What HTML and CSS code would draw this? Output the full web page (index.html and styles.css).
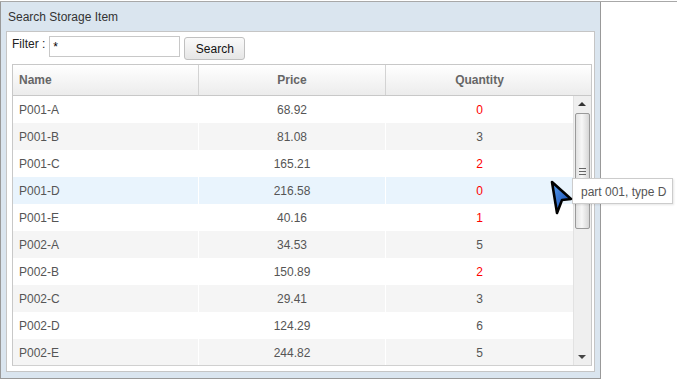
FILE: index.html
```html
<!DOCTYPE html>
<html lang="en">
<head>
    <meta charset="UTF-8">
    <title>Search Storage Item</title>
    <link rel="stylesheet" href="styles.css">
</head>
<body>
<div class="page">
    <div class="panel">
        <div class="panel-title">Search Storage Item</div>
        <div class="panel-body">
            <div class="filter-row">
                <label for="filter">Filter :</label>
                <input type="text" id="filter" value="*">
                <button class="button">Search</button>
            </div>
            <div class="grid">
                <div class="grid-head">
                    <div class="hcell col-name">Name</div>
                    <div class="hcell col-price">Price</div>
                    <div class="hcell col-qty">Quantity</div>
                </div>
                <div class="grid-body">
                    <div class="rows" id="rows"></div>
                    <div class="scrollbar">
                        <div class="arrow up"></div>
                        <div class="thumb"><span class="grip"></span></div>
                        <div class="track"></div>
                        <div class="arrow down"></div>
                    </div>
                </div>
            </div>
        </div>
    </div>
    <div class="tooltip">part 001, type D</div>
    <svg class="cursor" width="26" height="36" viewBox="0 0 26 36">
        <defs>
            <linearGradient id="cur" x1="0" y1="0" x2="1" y2="1">
                <stop offset="0" stop-color="#5aa0f0"/>
                <stop offset="1" stop-color="#0b3fa8"/>
            </linearGradient>
        </defs>
        <polygon points="3,2 22,19 13,20 8,33" fill="url(#cur)" stroke="#000" stroke-width="2.6" stroke-linejoin="round"/>
    </svg>
</div>

<script>
    const items = [
        ['P001-A', '68.92', 0],
        ['P001-B', '81.08', 3],
        ['P001-C', '165.21', 2],
        ['P001-D', '216.58', 0],
        ['P001-E', '40.16', 1],
        ['P002-A', '34.53', 5],
        ['P002-B', '150.89', 2],
        ['P002-C', '29.41', 3],
        ['P002-D', '124.29', 6],
        ['P002-E', '244.82', 5]
    ];

    const rows = document.getElementById('rows');
    items.forEach((item, i) => {
        const row = document.createElement('div');
        row.className = 'row' + (i % 2 ? ' alt' : '') + (i === 3 ? ' hover' : '');
        const low = item[2] < 3 ? ' low' : '';
        row.innerHTML =
            '<div class="cell col-name">' + item[0] + '</div>' +
            '<div class="cell col-price">' + item[1] + '</div>' +
            '<div class="cell col-qty' + low + '">' + item[2] + '</div>';
        rows.appendChild(row);
    });
</script>
</body>
</html>
```

FILE: styles.css
```css
body {
    margin: 0;
    font-family: "Liberation Sans", Arial, sans-serif;
    font-size: 12px;
    color: #333;
    background: #fff;
}
.page {
    position: relative;
    margin-top: 1px;
    border-top: 1px solid #a8a8a8;
    height: 380px;
}
.panel {
    width: 599px;
    height: 376px;
    border: 1px solid #999;
    border-top: none;
    background: #dae5ef;
}
.panel-title {
    height: 29px;
    line-height: 31px;
    padding-left: 7px;
    color: #333;
}
.panel-body {
    margin: 0 5px;
    height: 341px;
    border: 1px solid #c5c5c5;
    background: #fff;
    padding: 4px 3px 0 5px;
    box-sizing: border-box;
}
.filter-row {
    display: flex;
    align-items: flex-start;
    height: 24px;
}
.filter-row label {
    color: #222;
    line-height: 17px;
    margin-right: 4px;
}
.filter-row input {
    width: 131px;
    height: 21px;
    margin: 0 4px 0 0;
    padding: 0 3px;
    box-sizing: border-box;
    border: 1px solid #c8c8c8;
    font-family: inherit;
    font-size: 12px;
    outline: none;
}
.button {
    height: 23px;
    width: 61px;
    padding: 0;
    border: 1px solid #c0c0c0;
    border-radius: 3px;
    background: linear-gradient(#fafafa, #e6e6e6);
    font-family: inherit;
    font-size: 12px;
    color: #111;
    margin-top: 1px;
}
.grid {
    margin-top: 4px;
    width: 578px;
    border: 1px solid #c8c8c8;
    border-bottom-color: #d0d0d0;
}
.grid-head {
    display: flex;
    height: 30px;
    border-bottom: 1px solid #c8c8c8;
    background: linear-gradient(#ffffff, #ececec);
}
.hcell {
    line-height: 30px;
    font-weight: bold;
    color: #666;
    text-align: center;
    box-sizing: border-box;
}
.col-name {
    width: 186px;
    text-align: left;
    padding-left: 6px;
    border-right: 1px solid #d3d3d3;
    box-sizing: border-box;
}
.col-price {
    width: 187px;
    text-align: center;
    border-right: 1px solid #d3d3d3;
    box-sizing: border-box;
}
.hcell.col-qty {
    flex: 1;
    padding-right: 18px;
}
.grid-body {
    display: flex;
    height: 269px;
    overflow: hidden;
}
.rows {
    width: 560px;
}
.row {
    display: flex;
    height: 27px;
    line-height: 28px;
    background: #fff;
}
.row.alt {
    background: #f5f5f5;
}
.row.hover {
    background: #e9f4fd;
}
.cell {
    color: #555;
}
.cell.col-name,
.cell.col-price {
    border-right-color: #fff;
}
.cell.col-qty {
    flex: 1;
    text-align: center;
}
.cell.low {
    color: #f00;
}
.scrollbar {
    width: 17px;
    display: flex;
    flex-direction: column;
    background: #efefef;
    border-left: 1px solid #e2e2e2;
}
.arrow {
    height: 17px;
    position: relative;
}
.arrow::after {
    content: "";
    position: absolute;
    left: 4px;
    border-left: 4px solid transparent;
    border-right: 4px solid transparent;
}
.arrow.up::after {
    top: 6px;
    border-bottom: 4px solid #333;
}
.arrow.down::after {
    top: 7px;
    border-top: 4px solid #444;
}
.thumb {
    height: 114px;
    margin: 0 1px;
    border: 1px solid #9a9a9a;
    border-radius: 2px;
    background: linear-gradient(90deg, #e2e2e2, #f7f7f7 45%, #d6d6d6);
    display: flex;
    align-items: center;
    justify-content: center;
}
.grip {
    width: 7px;
    height: 5px;
    border-top: 1px solid #666;
    border-bottom: 1px solid #666;
    position: relative;
}
.grip::after {
    content: "";
    position: absolute;
    left: 0;
    right: 0;
    top: 2px;
    border-top: 1px solid #666;
}
.track {
    flex: 1;
}
.tooltip {
    position: absolute;
    left: 572px;
    top: 176px;
    width: 101px;
    height: 26px;
    line-height: 26px;
    padding-left: 8px;
    box-sizing: border-box;
    border: 1px solid #ccc;
    background: #fff;
    color: #555;
    white-space: nowrap;
    box-shadow: 1px 1px 2px rgba(0, 0, 0, 0.1);
}
.cursor {
    position: absolute;
    left: 549px;
    top: 178px;
}
```
